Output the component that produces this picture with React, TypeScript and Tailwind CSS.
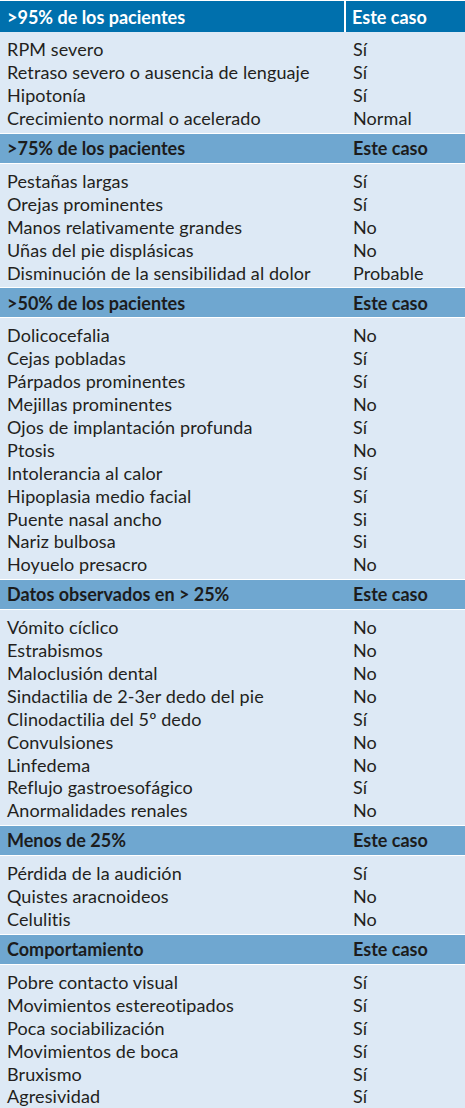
import React from "react";

type Section = { title: string; rows: [string, string][]; dark?: boolean };

const sections: Section[] = [
  {
    title: ">95% de los pacientes",
    dark: true,
    rows: [
      ["RPM severo", "Sí"],
      ["Retraso severo o ausencia de lenguaje", "Sí"],
      ["Hipotonía", "Sí"],
      ["Crecimiento normal o acelerado", "Normal"],
    ],
  },
  {
    title: ">75% de los pacientes",
    rows: [
      ["Pestañas largas", "Sí"],
      ["Orejas prominentes", "Sí"],
      ["Manos relativamente grandes", "No"],
      ["Uñas del pie displásicas", "No"],
      ["Disminución de la sensibilidad al dolor", "Probable"],
    ],
  },
  {
    title: ">50% de los pacientes",
    rows: [
      ["Dolicocefalia", "No"],
      ["Cejas pobladas", "Sí"],
      ["Párpados prominentes", "Sí"],
      ["Mejillas prominentes", "No"],
      ["Ojos de implantación profunda", "Sí"],
      ["Ptosis", "No"],
      ["Intolerancia al calor", "Sí"],
      ["Hipoplasia medio facial", "Sí"],
      ["Puente nasal ancho", "Si"],
      ["Nariz bulbosa", "Si"],
      ["Hoyuelo presacro", "No"],
    ],
  },
  {
    title: "Datos observados en > 25%",
    rows: [
      ["Vómito cíclico", "No"],
      ["Estrabismos", "No"],
      ["Maloclusión dental", "No"],
      ["Sindactilia de 2-3er dedo del pie", "No"],
      ["Clinodactilia del 5º dedo", "Sí"],
      ["Convulsiones", "No"],
      ["Linfedema", "No"],
      ["Reflujo gastroesofágico", "Sí"],
      ["Anormalidades renales", "No"],
    ],
  },
  {
    title: "Menos de 25%",
    rows: [
      ["Pérdida de la audición", "Sí"],
      ["Quistes aracnoideos", "No"],
      ["Celulitis", "No"],
    ],
  },
  {
    title: "Comportamiento",
    rows: [
      ["Pobre contacto visual", "Sí"],
      ["Movimientos estereotipados", "Sí"],
      ["Poca sociabilización", "Sí"],
      ["Movimientos de boca", "Sí"],
      ["Bruxismo", "Sí"],
      ["Agresividad", "Sí"],
    ],
  },
];

export default function App() {
  return (
    <div
      className="w-[465px] h-[1108px] overflow-hidden bg-white pt-[1px] text-[#231f20]"
      style={{ fontFamily: "Lato, 'Open Sans', sans-serif" }}
    >
      {sections.map((s, i) =>
        <div key={i} className="flex flex-col">
          {s.dark ? (
            <div className="flex h-[31px] bg-[#0070ad] text-white font-bold text-[18px] leading-none">
              <div className="w-[346px] flex items-center pl-[7px] border-r-[2px] border-white">{s.title}</div>
              <div className="flex-1 flex items-center pl-[6px]">Este caso</div>
            </div>
          ) : (
            <div className="flex h-[31px] bg-[#6fa7d0] border-y border-white font-bold text-[18px] leading-none text-[#1c1c1c]">
              <div className="w-[353px] flex items-center pl-[7px]">{s.title}</div>
              <div className="flex-1 flex items-center">Este caso</div>
            </div>
          )}
          <div className="bg-[#dde9f5] pt-[6px] pb-[3px]">
            {s.rows.map(([a, b], j) => (
              <div key={j} className="flex h-[22.9px] items-center text-[18px] tracking-[0.1px] leading-none">
                <div className="w-[353px] pl-[7px] whitespace-nowrap">{a}</div>
                <div className="flex-1">{b}</div>
              </div>
            ))}
          </div>
        </div>
      )}
    </div>
  );
}
